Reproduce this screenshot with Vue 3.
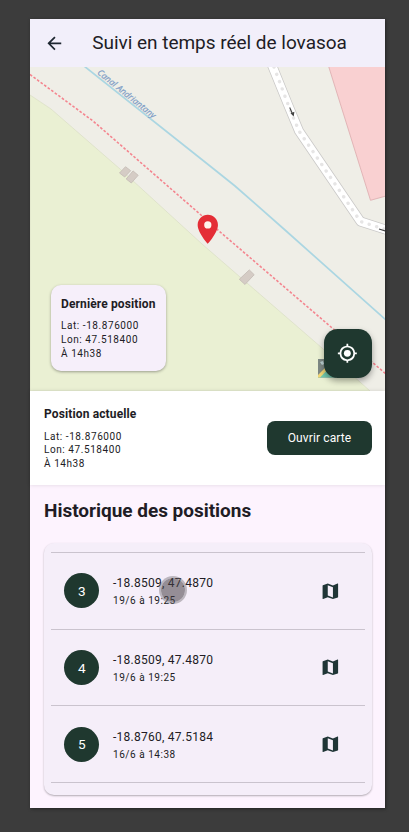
<script setup>
const positions = [
  { id: 3, coords: '-18.8509, 47.4870', date: '19/6 à 19:25' },
  { id: 4, coords: '-18.8509, 47.4870', date: '19/6 à 19:25' },
  { id: 5, coords: '-18.8760, 47.5184', date: '16/6 à 14:38' },
]
</script>

<template>
  <div class="stage">
    <div class="screen">
      <header class="bar">
        <svg class="back" viewBox="0 0 24 24"><path d="M20 11H7.83l5.59-5.59L12 4l-8 8 8 8 1.41-1.41L7.83 13H20z" /></svg>
        <h1>Suivi en temps réel de lovasoa</h1>
      </header>

      <section class="map">
        <svg class="tiles" viewBox="30 67 355 324">
          <rect x="30" y="67" width="355" height="324" fill="#efeee7" />
          <path d="M30 95L51 109L120 169L202 244L240 277L322 348L370 391H30Z" fill="#eaf0d3" stroke="#dcdfc8" stroke-width=".8" />
          <path d="M328.5 66L370.5 200.300L386 196V66Z" fill="#f9d0d1" stroke="#dfb0b2" stroke-width=".9" />
          <path d="M84 66L210 166L235 186L285 230L386 320" fill="none" stroke="#abd6e2" stroke-width="1.700" />
          <path d="M30 74.500L93 121L201 215L219 231L331 327L386 374" fill="none" stroke="#f4858f" stroke-width="1.600" stroke-dasharray="2.600 1.800" />
          <g fill="none" stroke-linejoin="round">
            <path d="M271.500 64L289 107L299 131L360.500 221.500L390 231" stroke="#c9c8c7" stroke-width="9.800" />
            <path d="M271.500 64L289 107L299 131L360.500 221.500L390 231" stroke="#fff" stroke-width="8.300" />
            <path d="M274 67L289 107L299 131L360.500 221.500L390 231" stroke="#e6e5e5" stroke-width="3.400" stroke-linecap="round" stroke-dasharray=".1 7.700" />
          </g>
          <g stroke="#444" fill="#444">
            <path d="M289.700 107.500L292.500 114" stroke-width="1.100" />
            <path d="M290.500 113.200L294.400 111.800L293.700 116.500Z" stroke="none" />
            <path d="M379 229L386 231.300" stroke-width="1.200" />
          </g>
          <g fill="#d5ccc5" stroke="#c3bab4" stroke-width=".8">
            <path d="M125.500 166.700L130.700 170.700L124.700 177L119.500 173Z" />
            <path d="M133 170.900L138.200 175.300L131.300 183L126.200 179Z" />
            <path d="M249.300 269.900L254.200 274.700L245 284.500L239.300 279.300Z" />
          </g>
          <text class="canal" transform="translate(96.800 73.500) rotate(39)" textLength="72">Canal Andriantany</text>
          <g>
            <rect x="318" y="359" width="18" height="18.500" fill="#7e8985" />
            <path d="M318 377.500L336 359V377.500Z" fill="#72cbb0" />
            <path d="M318 377.500V375L334 359H336V361L320 377.500Z" fill="#f1d777" />
            <path d="M320 362l3-1 1 3-2 1z" fill="#bdd3d5" />
          </g>
          <g transform="translate(190.400 211.900) scale(1.450)">
            <circle cx="12" cy="9" r="3.200" fill="#fff4ed" />
            <path d="M12 2C8.130 2 5 5.130 5 9c0 5.250 7 13 7 13s7-7.750 7-13c0-3.870-3.130-7-7-7zm0 9.500a2.500 2.500 0 0 1 0-5 2.500 2.500 0 0 1 0 5z" fill="#e42d36" />
          </g>
        </svg>
        <div class="last">
          <h2>Dernière position</h2>
          <p>Lat: -18.876000</p>
          <p>Lon: 47.518400</p>
          <p>À 14h38</p>
        </div>
        <button class="locate">
          <svg viewBox="0 0 24 24">
            <circle cx="12" cy="12" r="4" fill="#fff" />
            <path fill="#fff" d="M20.940 11A8.994 8.994 0 0 0 13 3.060V1h-2v2.060A8.994 8.994 0 0 0 3.060 11H1v2h2.060A8.994 8.994 0 0 0 11 20.940V23h2v-2.060A8.994 8.994 0 0 0 20.940 13H23v-2h-2.060zM12 19a7 7 0 1 1 0-14 7 7 0 0 1 0 14z" />
          </svg>
        </button>
      </section>

      <section class="current">
        <div>
          <h2>Position actuelle</h2>
          <p>Lat: -18.876000</p>
          <p>Lon: 47.518400</p>
          <p>À 14h38</p>
        </div>
        <button class="open">Ouvrir carte</button>
      </section>

      <section class="history">
        <h2>Historique des positions</h2>
        <ul class="card">
          <li v-for="p in positions" :key="p.id">
            <span class="num">{{ p.id }}</span>
            <div class="info">
              <span class="coords">{{ p.coords }}</span>
              <span class="date">{{ p.date }}</span>
            </div>
            <svg class="mapicon" viewBox="0 0 24 24"><path d="M20.500 3l-.160.030L15 5.100 9 3 3.360 4.900c-.210.070-.360.250-.360.480V20.500c0 .280.220.500.500.500l.160-.030L9 18.900l6 2.100 5.640-1.900c.210-.070.360-.250.360-.480V3.500c0-.280-.220-.500-.500-.500zM15 19l-6-2.110V5l6 2.110V19z" /></svg>
          </li>
        </ul>
      </section>
      <span class="touch"></span>
    </div>
  </div>
</template>

<style>
body { background: #3c3c3c; }
</style>

<style scoped>
* { box-sizing: border-box; margin: 0; padding: 0; }
.stage {
  height: 832px;
  padding: 19px 24px 24px 30px;
  background: #3c3c3c;
  font-family: Roboto, sans-serif;
  color: #211c25;
}
.screen {
  position: relative;
  width: 355px;
  height: 789px;
  display: flex;
  flex-direction: column;
  background: #fdf3fe;
  box-shadow: 1px 1px 3px #242424;
}
.bar {
  height: 48px;
  flex: none;
  display: flex;
  align-items: center;
  padding-left: 14px;
  gap: 27.500px;
  background: #f2effa;
}
.back { width: 20.700px; height: 20.700px; fill: #1e2730; }
h1 { font-size: 19px; font-weight: 400; line-height: 24px; letter-spacing: -.02px; white-space: nowrap; }
.map { position: relative; height: 324px; flex: none; overflow: hidden; }
.tiles { display: block; width: 355px; height: 324px; }
.canal { font: italic 8.600px "Open Sans", sans-serif; fill: #7d9cc6; stroke: #7d9cc6; stroke-width: .2; }
.last {
  position: absolute;
  left: 21px;
  top: 218px;
  width: 115px;
  height: 86px;
  padding: 11px 10px;
  border-radius: 10px;
  background: #f6effa;
  box-shadow: 0 1px 3px rgba(0, 0, 0, .35);
}
.last h2, .current h2 {
  font-size: 12px;
  line-height: 16px;
  font-weight: 700;
  letter-spacing: .13px;
  margin-bottom: 7px;
  white-space: nowrap;
}
p { font-size: 10px; line-height: 13.800px; letter-spacing: .57px; white-space: nowrap; }
.current p { position: relative; top: .5px; }
.locate {
  position: absolute;
  left: 293.500px;
  top: 262px;
  width: 48.500px;
  height: 48.500px;
  display: flex;
  align-items: center;
  justify-content: center;
  border: 0;
  border-radius: 13.800px;
  background: #1f382f;
  box-shadow: 0 3px 6px rgba(0, 0, 0, .35);
}
.locate svg { width: 20.700px; height: 20.700px; }
.current {
  position: relative;
  height: 93.500px;
  flex: none;
  display: flex;
  justify-content: space-between;
  align-items: flex-start;
  padding: 15px 13px 0 14px;
  background: #fff;
  box-shadow: 0 0 4px rgba(0, 0, 0, .12);
}
.open {
  width: 105px;
  height: 34.500px;
  margin-top: 14.700px;
  border: 0;
  border-radius: 8px;
  background: #1f382f;
  color: #fff;
  font: 400 12px Roboto, sans-serif;
  letter-spacing: .12px;
}
.history { flex: 1; padding: 13px 13px 0 14px; }
.history h2 { font-size: 19px; line-height: 26px; font-weight: 700; letter-spacing: -.02px; white-space: nowrap; }
.card {
  list-style: none;
  height: 252px;
  margin-top: 19.500px;
  padding: 9px 7px 0;
  border-radius: 10px;
  background: #f5eef9;
  box-shadow: 0 1px 2px rgba(0, 0, 0, .3);
}
li {
  height: 76.700px;
  display: flex;
  align-items: center;
  padding: 0 24px 0 13.400px;
  border-top: 1px solid #cac3ce;
}
li:last-child { height: 77.700px; border-bottom: 1px solid #cac3ce; }
.num {
  width: 35px;
  height: 35px;
  display: flex;
  align-items: center;
  justify-content: center;
  border-radius: 50%;
  background: #1f382f;
  color: #fff;
  font-size: 13.600px;
}
.info { flex: 1; display: flex; flex-direction: column; padding: 2.500px 0 0 13.600px; }
.coords { font-size: 12px; line-height: 18px; letter-spacing: .25px; }
.date { font-size: 10px; line-height: 17.500px; letter-spacing: .54px; }
.mapicon { width: 20.700px; height: 20.700px; fill: #1f3536; }
.touch {
  position: absolute;
  left: 129px;
  top: 557px;
  width: 28px;
  height: 28px;
  border: 2px solid rgba(120, 115, 120, .45);
  border-radius: 50%;
  background: rgba(70, 64, 70, .55);
  background-clip: padding-box;
}
</style>
